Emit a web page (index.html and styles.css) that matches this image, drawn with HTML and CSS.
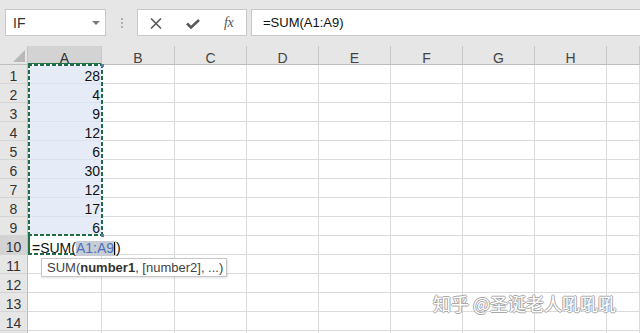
FILE: index.html
```html
<!DOCTYPE html>
<html>
<head>
<meta charset="utf-8">
<link rel="stylesheet" href="styles.css">
</head>
<body>
<div class="app">
  <div class="fbar">
    <div class="namebox"><span class="nm">IF</span><span class="dd"></span></div>
    <div class="grip"><i></i><i></i><i></i></div>
    <div class="btns">
      <svg class="ic-x" width="12" height="11" viewBox="0 0 12 11"><path d="M1 0.5 L11 10.5 M11 0.5 L1 10.5" stroke="#5a5a5a" stroke-width="1.6" fill="none"/></svg>
      <svg class="ic-ok" width="14" height="10" viewBox="0 0 14 10"><path d="M1 4.5 L5 8.5 L13 1" stroke="#5a5a5a" stroke-width="2.6" fill="none"/></svg>
      <span class="fx">fx</span>
    </div>
    <div class="formula">=SUM(A1:A9)</div>
  </div>

  <div class="sheet">
    <div class="corner"><svg width="12" height="12" viewBox="0 0 12 12"><polygon points="12,0 12,12 0,12" fill="#b8b8b8"/></svg></div>
    <div class="ch ch-sel">A</div><div class="ch">B</div><div class="ch">C</div><div class="ch">D</div><div class="ch">E</div><div class="ch">F</div><div class="ch">G</div><div class="ch">H</div><div class="ch"></div>

    <div class="rh">1</div><div class="c sel num">28</div><div class="c"></div><div class="c"></div><div class="c"></div><div class="c"></div><div class="c"></div><div class="c"></div><div class="c"></div><div class="c"></div>
    <div class="rh">2</div><div class="c sel num">4</div><div class="c"></div><div class="c"></div><div class="c"></div><div class="c"></div><div class="c"></div><div class="c"></div><div class="c"></div><div class="c"></div>
    <div class="rh">3</div><div class="c sel num">9</div><div class="c"></div><div class="c"></div><div class="c"></div><div class="c"></div><div class="c"></div><div class="c"></div><div class="c"></div><div class="c"></div>
    <div class="rh">4</div><div class="c sel num">12</div><div class="c"></div><div class="c"></div><div class="c"></div><div class="c"></div><div class="c"></div><div class="c"></div><div class="c"></div><div class="c"></div>
    <div class="rh">5</div><div class="c sel num">6</div><div class="c"></div><div class="c"></div><div class="c"></div><div class="c"></div><div class="c"></div><div class="c"></div><div class="c"></div><div class="c"></div>
    <div class="rh">6</div><div class="c sel num">30</div><div class="c"></div><div class="c"></div><div class="c"></div><div class="c"></div><div class="c"></div><div class="c"></div><div class="c"></div><div class="c"></div>
    <div class="rh">7</div><div class="c sel num">12</div><div class="c"></div><div class="c"></div><div class="c"></div><div class="c"></div><div class="c"></div><div class="c"></div><div class="c"></div><div class="c"></div>
    <div class="rh">8</div><div class="c sel num">17</div><div class="c"></div><div class="c"></div><div class="c"></div><div class="c"></div><div class="c"></div><div class="c"></div><div class="c"></div><div class="c"></div>
    <div class="rh">9</div><div class="c sel num">6</div><div class="c"></div><div class="c"></div><div class="c"></div><div class="c"></div><div class="c"></div><div class="c"></div><div class="c"></div><div class="c"></div>
    <div class="rh rh-act">10</div><div class="c edit">=SUM(<span class="ref">A1:A9<i class="caret"></i></span>)</div><div class="c"></div><div class="c"></div><div class="c"></div><div class="c"></div><div class="c"></div><div class="c"></div><div class="c"></div><div class="c"></div>
    <div class="rh">11</div><div class="c"></div><div class="c"></div><div class="c"></div><div class="c"></div><div class="c"></div><div class="c"></div><div class="c"></div><div class="c"></div><div class="c"></div>
    <div class="rh">12</div><div class="c"></div><div class="c"></div><div class="c"></div><div class="c"></div><div class="c"></div><div class="c"></div><div class="c"></div><div class="c"></div><div class="c"></div>
    <div class="rh">13</div><div class="c"></div><div class="c"></div><div class="c"></div><div class="c"></div><div class="c"></div><div class="c"></div><div class="c"></div><div class="c"></div><div class="c"></div>
    <div class="rh">14</div><div class="c"></div><div class="c"></div><div class="c"></div><div class="c"></div><div class="c"></div><div class="c"></div><div class="c"></div><div class="c"></div><div class="c"></div>
    <div class="rh"></div><div class="c"></div><div class="c"></div><div class="c"></div><div class="c"></div><div class="c"></div><div class="c"></div><div class="c"></div><div class="c"></div><div class="c"></div>
  </div>

  <div class="range"></div>
  <div class="tip">SUM(<b>number1</b>, [number2], ...)</div>
  <div class="mark">知乎 @圣诞老人吼吼吼</div>
</div>
</body>
</html>
```

FILE: styles.css
```css
html, body {
  margin: 0;
  padding: 0;
  background: #fff;
}
body {
  width: 640px;
  height: 333px;
  overflow: hidden;
  font-family: "Liberation Sans", Arial, sans-serif;
}
.app {
  position: relative;
  width: 640px;
  height: 333px;
  overflow: hidden;
}

/* formula bar */
.fbar {
  height: 46px;
  box-sizing: border-box;
  padding-top: 9px;
  background: #e6e6e6;
  display: flex;
  align-items: flex-start;
}
.namebox {
  margin-left: 5px;
  width: 101px;
  height: 27px;
  box-sizing: border-box;
  border: 1px solid #c8c8c8;
  background: #fff;
  display: flex;
  align-items: center;
  padding-left: 7px;
  font-size: 14px;
  color: #333;
}
.nm { margin-top: 1px; }
.dd {
  margin-left: auto;
  margin-right: 5px;
  width: 0;
  height: 0;
  border-left: 4px solid transparent;
  border-right: 4px solid transparent;
  border-top: 4px solid #7a7a7a;
}
.grip {
  width: 31px;
  height: 27px;
  display: flex;
  flex-direction: column;
  align-items: center;
  justify-content: center;
  gap: 2px;
}
.grip i {
  display: block;
  width: 2px;
  height: 2px;
  background: #b0b0b0;
}
.btns {
  width: 110px;
  height: 27px;
  box-sizing: border-box;
  border: 1px solid #c8c8c8;
  background: #fff;
  display: flex;
  align-items: center;
}
.ic-x { margin-left: 12px; margin-top: 1px; }
.ic-ok { margin-left: 24px; margin-top: 3px; }
.fx {
  margin-left: 24px;
  font-family: "Liberation Serif", "Times New Roman", serif;
  font-style: italic;
  font-size: 14px;
  color: #555;
  letter-spacing: -0.5px;
}
.formula {
  margin-left: 4px;
  flex: 1;
  height: 27px;
  box-sizing: border-box;
  border: 1px solid #c8c8c8;
  border-right: none;
  background: #fff;
  padding-left: 11px;
  font-size: 13px;
  line-height: 25px;
  color: #111;
}

/* sheet grid */
.sheet {
  display: grid;
  grid-template-columns: 28px 74px 73px 72px 72px 72px 72px 72px 72px 33px;
  grid-auto-rows: 19px;
  font-size: 14px;
}
.corner {
  background: #e6e6e6;
  border-right: 1px solid #c4c4c4;
  border-bottom: 1px solid #bdbdbd;
  box-sizing: border-box;
  display: flex;
  align-items: flex-end;
  justify-content: flex-end;
  padding: 0 2px 2px 0;
}
.ch {
  background: #e6e6e6;
  box-sizing: border-box;
  border-bottom: 1px solid #bdbdbd;
  border-right: 1px solid #c8c8c8;
  color: #444;
  text-align: center;
  line-height: 13px;
  padding-top: 6px;
}
.ch-sel {
  background: #d3d3d3;
  border-bottom: 2px solid #217346;
  color: #333;
}
.rh {
  background: #e6e6e6;
  box-sizing: border-box;
  border-right: 1px solid #bdbdbd;
  border-bottom: 1px solid #d4d4d4;
  color: #333;
  text-align: center;
  line-height: 13px;
  padding-top: 5px;
}
.rh-act {
  background: #d3d3d3;
}
.c {
  box-sizing: border-box;
  border-right: 1px solid #dadada;
  border-bottom: 1px solid #dadada;
  line-height: 13px;
  padding: 5px 2px 0 2px;
  color: #111;
  white-space: nowrap;
}
.sel {
  background: #e5ecf7;
  border-bottom-color: #dde3ee;
}
.num { text-align: right; padding-right: 1px; }
.edit {
  position: relative;
  z-index: 2;
  border-right-color: transparent;
  border-bottom: 2px solid transparent;
  background:
    repeating-linear-gradient(90deg, #1f6b47 0 4px, #ffffff 4px 6px) left bottom / 100% 2px no-repeat;
  box-shadow: inset 2px 0 0 #217346;
  background-origin: border-box;
  padding-left: 4px;
  padding-top: 5px;
  font-size: 14px;
}
.ref {
  display: inline-block;
  background: #c8cdd5;
  color: #4a72c0;
  line-height: 14px;
  padding: 0 1px 1px 0;
}
.caret {
  display: inline-block;
  width: 1px;
  height: 13px;
  background: #000;
  vertical-align: -2px;
}

/* overlays */
.range {
  position: absolute;
  left: 28px;
  top: 64px;
  width: 75px;
  height: 172px;
  z-index: 3;
  background:
    repeating-linear-gradient(90deg, #1f6b47 0 4px, #f4f8f6 4px 6px) left top / 100% 2px no-repeat,
    repeating-linear-gradient(90deg, #1f6b47 0 4px, #f4f8f6 4px 6px) left bottom / 100% 2px no-repeat,
    repeating-linear-gradient(180deg, #1f6b47 0 4px, #f4f8f6 4px 6px) left top / 2px 100% no-repeat,
    repeating-linear-gradient(180deg, #1f6b47 0 4px, #f4f8f6 4px 6px) right top / 2px 100% no-repeat;
}
.range::before, .range::after {
  content: "";
  position: absolute;
  right: -1px;
  width: 3px;
  height: 3px;
  background: #5a7bb5;
}
.range::before { top: 0; }
.range::after { bottom: -1px; }
.tip {
  position: absolute;
  left: 41px;
  top: 258px;
  width: 186px;
  height: 19px;
  box-sizing: border-box;
  background: #fff;
  border: 1px solid #c6c6c6;
  box-shadow: 1px 1px 2px rgba(0, 0, 0, 0.12);
  padding-left: 5px;
  font-size: 13px;
  line-height: 17px;
  color: #444;
  z-index: 4;
  white-space: nowrap;
}
.tip b { color: #333; }
.mark {
  position: absolute;
  left: 433px;
  top: 292px;
  font-family: "Noto Sans CJK SC", sans-serif;
  font-size: 18px;
  line-height: 22px;
  color: #fff;
  text-shadow: -1px 0 #a8a8a8, 1px 0 #a8a8a8, 0 -1px #a8a8a8, 0 1px #a8a8a8;
  white-space: nowrap;
  z-index: 5;
}
```
